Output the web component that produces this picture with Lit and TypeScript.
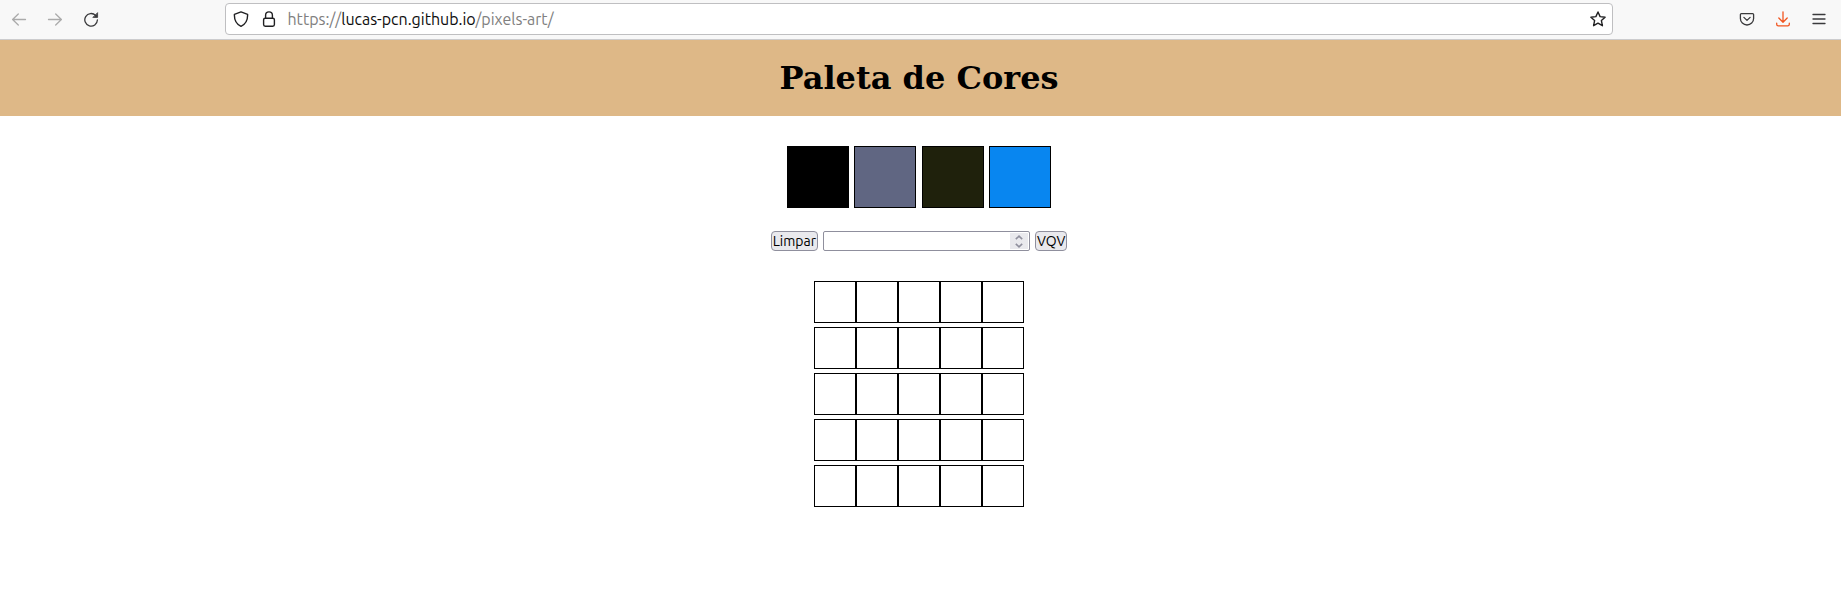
import { LitElement, html, css, svg } from "lit";
import { customElement, property, state } from "lit/decorators.js";
import { styleMap } from "lit/directives/style-map.js";

@customElement("browser-bar")
class BrowserBar extends LitElement {
  static styles = css`
    :host {
      display: block;
      font-family: Ubuntu, "Noto Sans", sans-serif;
    }
    .bar {
      display: flex;
      align-items: center;
      box-sizing: border-box;
      height: 40px;
      padding: 0 11px 2px 8px;
      background: #f8f8f8;
      border-bottom: 1px solid #ccccce;
    }
    .tools {
      display: flex;
      gap: 14px;
    }
    .spring {
      flex: 124 1 0;
    }
    button {
      display: grid;
      place-items: center;
      width: 22px;
      height: 22px;
      padding: 0;
      border: 0;
      background: none;
      color: #3a3a3c;
    }
    button:disabled {
      color: #ababab;
    }
    .accent {
      color: #f1551f;
    }
    svg {
      display: block;
      width: 16px;
      height: 16px;
      fill: none;
      stroke: currentColor;
      stroke-width: 1.3;
      stroke-linecap: round;
      stroke-linejoin: round;
    }
    .address {
      flex: 1386 1 0;
      display: flex;
      align-items: center;
      box-sizing: border-box;
      height: 32px;
      padding: 0 2px 0 3px;
      background: #fff;
      border: 1px solid #bfbfc1;
      border-radius: 4px;
    }
    .address button {
      width: 24px;
      color: #202022;
    }
    .address button + button {
      margin-left: 4px;
    }
    .address svg {
      stroke-width: 1.4;
    }
    .url {
      flex: 1;
      padding-left: 6px;
      font-size: 16px;
      line-height: 20px;
      color: #808080;
      text-decoration: none;
      white-space: nowrap;
    }
    .host {
      color: #0c0c0d;
    }
  `;

  private icon(shape: unknown) {
    return html`<svg viewBox="0 0 16 16" aria-hidden="true">${shape}</svg>`;
  }

  render() {
    return html`
      <nav class="bar" aria-label="Navegador">
        <div class="tools">
          <button disabled aria-label="Voltar">${this.icon(svg`<path d="M14.5 8.5H1.8M7.3 3L1.6 8.5L7.3 14"/>`)}</button>
          <button disabled aria-label="Avançar">${this.icon(svg`<path d="M1.5 8.5H14.2M8.7 3L14.4 8.5L8.7 14"/>`)}</button>
          <button aria-label="Recarregar">${this.icon(svg`<path d="M12.6 4.4A6.3 6.3 0 1 0 14.4 9"/><path d="M14.6 2V6.4H10.2Z" fill="currentColor" stroke-width=".8"/>`)}</button>
        </div>
        <span class="spring"></span>
        <div class="address">
          <button aria-label="Proteção">${this.icon(svg`<path d="M8 .9L14.6 3.4C14.8 8.3 12.9 13 8 15.3C3.1 13 1.2 8.3 1.4 3.4Z"/>`)}</button>
          <button aria-label="Conexão segura">${this.icon(svg`<rect x="2.6" y="7.2" width="10.8" height="8" rx="1.6"/><path d="M4.6 7V4.3A3.4 3.4 0 0 1 11.4 4.3V7"/>`)}</button>
          <a class="url" href="#">https://<span class="host">lucas-pcn.github.io</span>/pixels-art/</a>
          <button aria-label="Favoritar">${this.icon(svg`<path d="M8 1L10.1 5.6L15.1 6.2L11.4 9.6L12.4 14.7L8 12.2L3.6 14.7L4.6 9.6L.9 6.2L5.9 5.6Z"/>`)}</button>
        </div>
        <span class="spring"></span>
        <div class="tools">
          <button aria-label="Pocket">${this.icon(svg`<path d="M2.4 2.6H13.6Q14.6 2.6 14.6 3.6V7.4A6.6 6.6 0 0 1 1.4 7.4V3.6Q1.4 2.6 2.4 2.6Z"/><path d="M4.9 6.4L8 9.4L11.1 6.4"/>`)}</button>
          <button class="accent" aria-label="Downloads">${this.icon(svg`<path d="M8 .8V11M3.8 7L8 11.2L12.2 7M1.7 12.2V13.2Q1.7 14.8 3.3 14.8H12.7Q14.3 14.8 14.3 13.2V12.2"/>`)}</button>
          <button aria-label="Menu">${this.icon(svg`<path d="M2 3.5H14M2 8H14M2 12.5H14"/>`)}</button>
        </div>
      </nav>
    `;
  }
}

@customElement("size-field")
class SizeField extends LitElement {
  static styles = css`
    :host {
      display: block;
    }
    .field {
      display: flex;
      box-sizing: border-box;
      width: 207px;
      height: 20px;
      padding: 1px;
      border: 1px solid #8f8f9d;
      border-radius: 2px;
      background: #fff;
    }
    input {
      flex: 1;
      min-width: 0;
      padding: 0 2px;
      border: 0;
      outline: 0;
      background: none;
      font: 14px Ubuntu, "Noto Sans", sans-serif;
      appearance: textfield;
      -moz-appearance: textfield;
    }
    input::-webkit-inner-spin-button {
      appearance: none;
      -webkit-appearance: none;
      margin: 0;
    }
    .steps {
      display: flex;
      flex-direction: column;
      width: 18px;
      background: #e9e9ed;
    }
    button {
      flex: 1;
      display: grid;
      place-items: center;
      padding: 0;
      border: 0;
      background: none;
      color: #8f8f9d;
    }
    svg {
      display: block;
      width: 8px;
      height: 5px;
      fill: none;
      stroke: currentColor;
      stroke-width: 1.6;
    }
  `;

  private step(amount: number) {
    const input = this.renderRoot.querySelector("input")!;
    if (amount > 0) input.stepUp();
    else input.stepDown();
  }

  render() {
    return html`
      <div class="field">
        <input type="number" min="1" aria-label="Tamanho do quadro" />
        <div class="steps">
          <button aria-label="Aumentar" @click=${() => this.step(1)}>
            <svg viewBox="0 0 8 5"><path d="M.8 4.2L4 1.2L7.2 4.2" /></svg>
          </button>
          <button aria-label="Diminuir" @click=${() => this.step(-1)}>
            <svg viewBox="0 0 8 5"><path d="M.8 .8L4 3.8L7.2 .8" /></svg>
          </button>
        </div>
      </div>
    `;
  }
}

@customElement("app-root")
class AppRoot extends LitElement {
  @property({ type: Number }) size = 5;
  @state() private selected = "#000000";
  @state() private cells: string[] = Array(25).fill("#ffffff");

  private colors = ["#000000", "#606682", "#1f210c", "#0886f0"];

  static styles = css`
    :host {
      display: block;
      min-height: 100vh;
      background: #fff;
    }
    header {
      padding: 20px 3px 19px 0;
      background: #deb887;
    }
    h1 {
      margin: 0;
      font: bold 32px/37px "DejaVu Serif", serif;
      text-align: center;
      color: #000;
    }
    main {
      display: flex;
      flex-direction: column;
      align-items: center;
      padding: 30px 3px 30px 0;
    }
    .palette {
      display: flex;
      justify-content: space-between;
      width: 264px;
    }
    .color {
      box-sizing: border-box;
      width: 62px;
      height: 62px;
      padding: 0;
      border: 1px solid #000;
    }
    .controls {
      display: flex;
      gap: 5px;
      margin: 23px 0 30px;
    }
    .action {
      box-sizing: border-box;
      height: 20px;
      padding: 0 1px;
      border: 1px solid #8f8f9d;
      border-radius: 4px;
      background: #e9e9ed;
      color: #000;
      font: 14px/18px Ubuntu, "Noto Sans", sans-serif;
    }
    .board {
      display: grid;
      row-gap: 4px;
    }
    .row {
      display: flex;
    }
    .pixel {
      box-sizing: border-box;
      width: 42px;
      height: 42px;
      padding: 0;
      border: 1px solid #000;
    }
  `;

  private paint(index: number) {
    this.cells = this.cells.map((c, i) => (i === index ? this.selected : c));
  }

  private clear() {
    this.cells = this.cells.map(() => "#ffffff");
  }

  render() {
    const lines = Array.from({ length: this.size }, (_, r) =>
      this.cells.slice(r * this.size, (r + 1) * this.size)
    );
    return html`
      <browser-bar></browser-bar>
      <header><h1>Paleta de Cores</h1></header>
      <main>
        <div class="palette">
          ${this.colors.map(
            (c) => html`<button class="color" aria-label=${c} style=${styleMap({ backgroundColor: c })}
              @click=${() => (this.selected = c)}></button>`
          )}
        </div>
        <div class="controls">
          <button class="action" @click=${this.clear}>Limpar</button>
          <size-field></size-field>
          <button class="action">VQV</button>
        </div>
        <div class="board">
          ${lines.map(
            (line, r) => html`<div class="row">
              ${line.map(
                (c, i) => html`<button class="pixel" aria-label="Pixel ${r + 1}, ${i + 1}"
                  style=${styleMap({ backgroundColor: c })}
                  @click=${() => this.paint(r * this.size + i)}></button>`
              )}
            </div>`
          )}
        </div>
      </main>
    `;
  }
}
